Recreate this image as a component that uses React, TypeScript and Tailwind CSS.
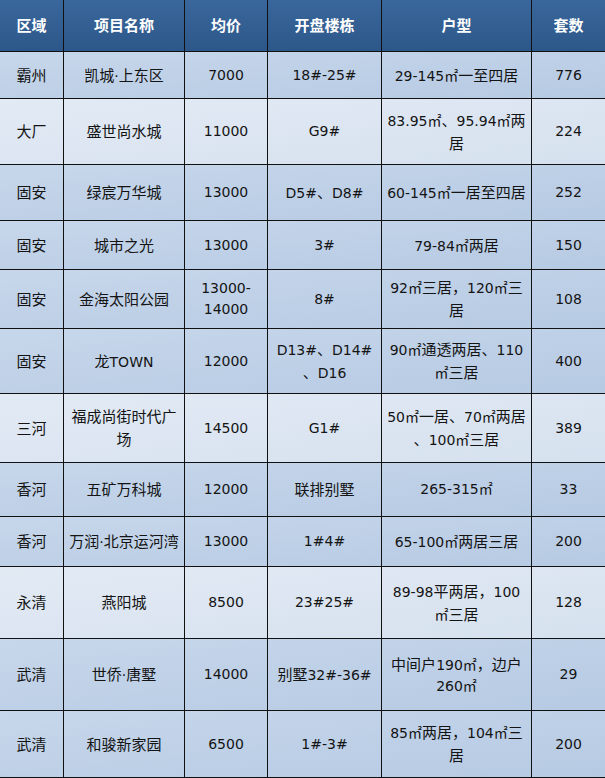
import React from "react";

type Row = { h: string; light: boolean; cells: string[][] };

const rows: Row[] = [
  { h: "h-[47px]", light: false, cells: [["霸州"], ["凯城·上东区"], ["7000"], ["18#-25#"], ["29-145㎡一至四居"], ["776"]] },
  { h: "h-[66px]", light: true, cells: [["大厂"], ["盛世尚水城"], ["11000"], ["G9#"], ["83.95㎡、95.94㎡两", "居"], ["224"]] },
  { h: "h-[56px]", light: false, cells: [["固安"], ["绿宸万华城"], ["13000"], ["D5#、D8#"], ["60-145㎡一居至四居"], ["252"]] },
  { h: "h-[49px]", light: false, cells: [["固安"], ["城市之光"], ["13000"], ["3#"], ["79-84㎡两居"], ["150"]] },
  { h: "h-[59px]", light: false, cells: [["固安"], ["金海太阳公园"], ["13000-", "14000"], ["8#"], ["92㎡三居，120㎡三", "居"], ["108"]] },
  { h: "h-[65px]", light: false, cells: [["固安"], ["龙TOWN"], ["12000"], ["D13#、D14#", "、D16"], ["90㎡通透两居、110", "㎡三居"], ["400"]] },
  { h: "h-[69px]", light: true, cells: [["三河"], ["福成尚街时代广", "场"], ["14500"], ["G1#"], ["50㎡一居、70㎡两居", "、100㎡三居"], ["389"]] },
  { h: "h-[54px]", light: false, cells: [["香河"], ["五矿万科城"], ["12000"], ["联排别墅"], ["265-315㎡"], ["33"]] },
  { h: "h-[50px]", light: false, cells: [["香河"], ["万润·北京运河湾"], ["13000"], ["1#4#"], ["65-100㎡两居三居"], ["200"]] },
  { h: "h-[72px]", light: true, cells: [["永清"], ["燕阳城"], ["8500"], ["23#25#"], ["89-98平两居，100", "㎡三居"], ["128"]] },
  { h: "h-[72px]", light: false, cells: [["武清"], ["世侨·唐墅"], ["14000"], ["别墅32#-36#"], ["中间户190㎡，边户", "260㎡"], ["29"]] },
  { h: "h-[67px]", light: false, cells: [["武清"], ["和骏新家园"], ["6500"], ["1#-3#"], ["85㎡两居，104㎡三", "居"], ["200"]] },
];

const headers = ["区域", "项目名称", "均价", "开盘楼栋", "户型", "套数"];

const grid = "grid grid-cols-[64px_121px_83px_114px_150px_73px]";

function Mixed({ text }: { text: string }) {
  const parts = text.split(/([\u3000-\u303f\u4e00-\u9fff\uff00-\uffef]+)/).filter((p) => p.length > 0);
  return (
    <>
      {parts.map((p, i) =>
        /[\u3000-\u303f\u4e00-\u9fff\uff00-\uffef]/.test(p) ? (
          <span key={i} className="text-[15px]" style={{ fontFamily: '"Noto Sans CJK SC", sans-serif' }}>
            {p}
          </span>
        ) : (
          <span key={i}>{p}</span>
        )
      )}
    </>
  );
}

export default function App() {
  return (
    <div
      className="w-[605px] h-[778px] overflow-hidden bg-white"
      style={{ fontFamily: '"DejaVu Sans", "Noto Sans CJK SC", sans-serif' }}
    >
      <div className={`${grid} h-[52px] border-b border-[#111] bg-gradient-to-b from-[#3a679c] to-[#2c5789]`}>
        {headers.map((t, i) => (
          <div
            key={i}
            className={`flex items-center justify-center text-white font-bold text-[15px] ${i < 5 ? "border-r border-[#111]" : ""}`}
            style={{ fontFamily: '"Noto Sans CJK SC", sans-serif' }}
          >
            {t}
          </div>
        ))}
      </div>
      {rows.map((r, ri) => (
        <div
          key={ri}
          className={`${grid} ${r.h} border-b border-[#111] ${
            r.light
              ? "bg-gradient-to-br from-[#e2eaf4] to-[#d6e1ef]"
              : "bg-gradient-to-br from-[#c7d7eb] to-[#b6cae3]"
          }`}
        >
          {r.cells.map((lines, ci) => (
            <div
              key={ci}
              className={`flex flex-col items-center justify-center text-center text-[14px] leading-[21px] text-[#141414] whitespace-nowrap ${
                ci < 5 ? "border-r border-[#111]" : ""
              }`}
            >
              {lines.map((l, li) => (
                <span key={li} className="block">
                  <Mixed text={l} />
                </span>
              ))}
            </div>
          ))}
        </div>
      ))}
    </div>
  );
}
